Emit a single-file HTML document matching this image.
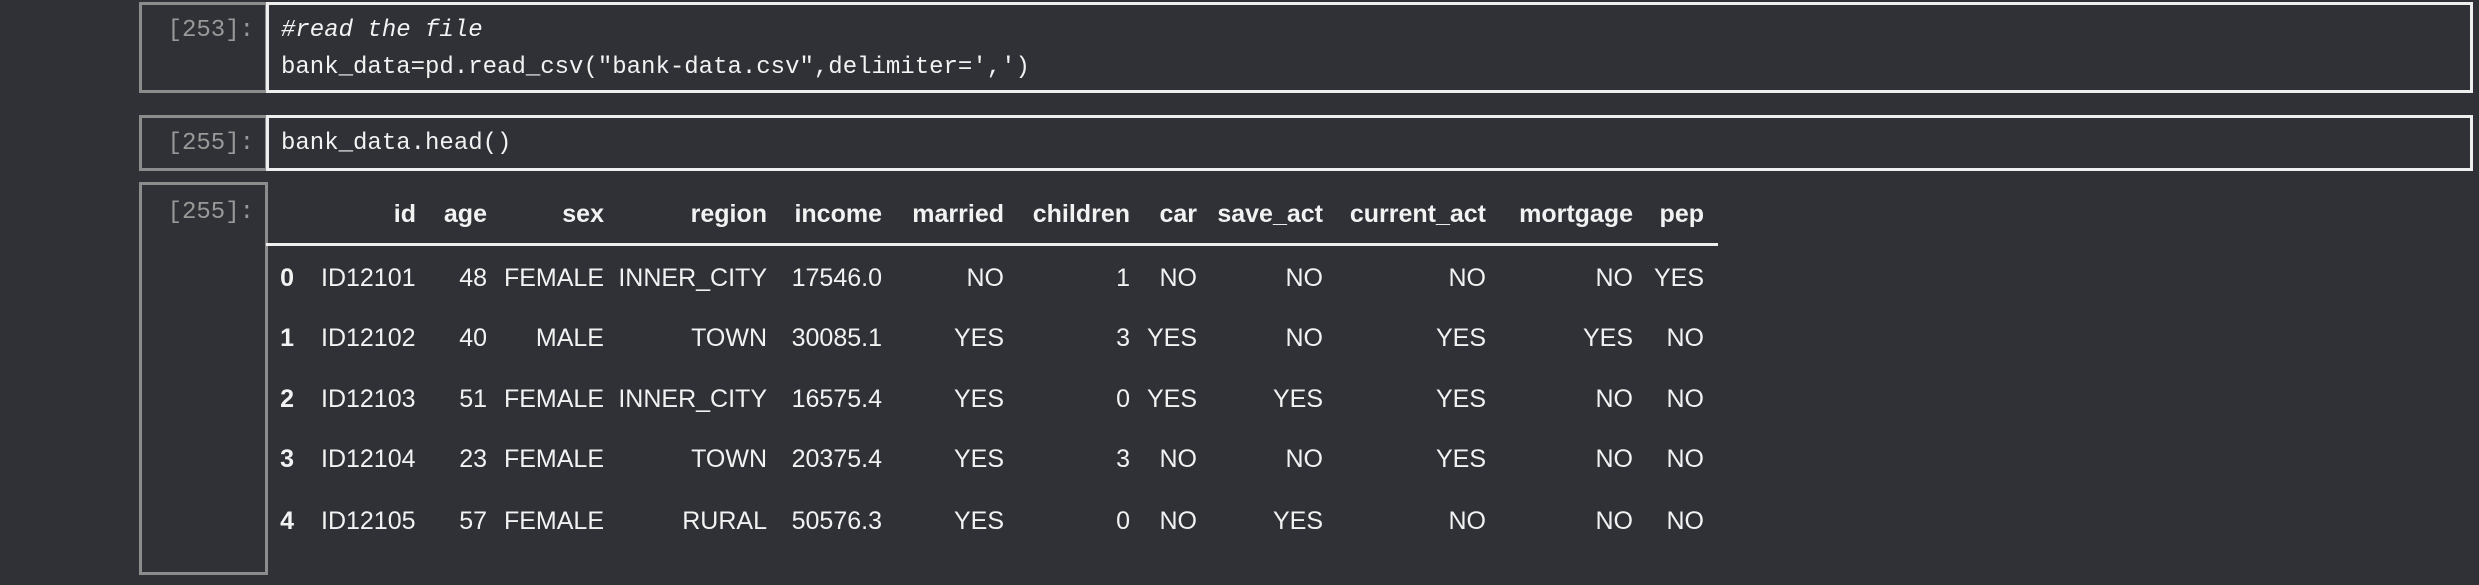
<!DOCTYPE html>
<html><head><meta charset="utf-8"><style>
html,body{margin:0;padding:0;background:#2f3136;width:2479px;height:585px;overflow:hidden;position:relative}
.b{position:absolute;box-sizing:border-box}
.p{border:3px solid #8c8c8c}
.i{border:3px solid #eeeeee}
.m{position:absolute;font-family:"Liberation Mono",monospace;font-size:24px;color:#f2f2f2;white-space:pre;line-height:1}
.pr{position:absolute;font-family:"Liberation Mono",monospace;font-size:24px;color:#999;white-space:pre;line-height:1;text-align:right;width:120px}
.t{position:absolute;font-family:"Liberation Sans",sans-serif;font-size:25px;color:#f2f2f2;white-space:pre;line-height:1;transform:translateX(-100%)}
.h{font-weight:bold}
</style></head><body>
<div class="b p" style="left:139px;top:2px;width:129px;height:91px"></div>
<div class="b i" style="left:266px;top:2px;width:2207px;height:91px"></div>
<div class="pr" style="left:134px;top:19px">[253]:</div>
<div class="m" style="left:281px;top:19px;font-style:italic">#read the file</div>
<div class="m" style="left:281px;top:56px">bank_data=pd.read_csv("bank-data.csv",delimiter=',')</div>

<div class="b p" style="left:139px;top:115px;width:129px;height:56px"></div>
<div class="b i" style="left:266px;top:115px;width:2207px;height:56px"></div>
<div class="pr" style="left:134px;top:132px">[255]:</div>
<div class="m" style="left:281px;top:132px">bank_data.head()</div>

<div class="b p" style="left:139px;top:182px;width:129px;height:393px"></div>
<div class="pr" style="left:134px;top:201px">[255]:</div>
<div class="b" style="left:266px;top:243px;width:1452px;height:3px;background:#eee"></div>
<div id="tbl"></div>
<script>
var cols=[416,487,604,767,882,1004,1130,1197,1323,1486,1633,1704];
var hdr=["id","age","sex","region","income","married","children","car","save_act","current_act","mortgage","pep"];
var rows=[
["ID12101","48","FEMALE","INNER_CITY","17546.0","NO","1","NO","NO","NO","NO","YES"],
["ID12102","40","MALE","TOWN","30085.1","YES","3","YES","NO","YES","YES","NO"],
["ID12103","51","FEMALE","INNER_CITY","16575.4","YES","0","YES","YES","YES","NO","NO"],
["ID12104","23","FEMALE","TOWN","20375.4","YES","3","NO","NO","YES","NO","NO"],
["ID12105","57","FEMALE","RURAL","50576.3","YES","0","NO","YES","NO","NO","NO"]];
var ys=[279,339,400,460,522],h="";
hdr.forEach(function(s,j){h+='<div class="t h" style="left:'+cols[j]+'px;top:202px">'+s+'</div>';});
rows.forEach(function(r,i){
 var y=ys[i]-13;
 h+='<div class="t h" style="left:294px;top:'+y+'px">'+i+'</div>';
 h+='<div class="t" style="left:321px;top:'+y+'px;transform:none">'+r[0]+'</div>';
 for(var j=1;j<12;j++)h+='<div class="t" style="left:'+cols[j]+'px;top:'+y+'px">'+r[j]+'</div>';
});
document.getElementById("tbl").innerHTML=h;
</script>
</body></html>
